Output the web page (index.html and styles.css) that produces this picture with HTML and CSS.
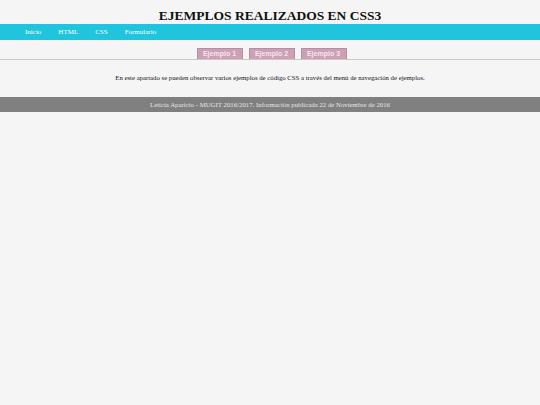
FILE: index.html
```html
<!DOCTYPE html>
<html lang="es">
<head>
<meta charset="utf-8">
<title>Ejemplos CSS3</title>
<link rel="stylesheet" href="styles.css">
</head>
<body>
<header class="header">
  <h1 class="title">EJEMPLOS REALIZADOS EN CSS3</h1>
  <nav class="nav">
    <a class="nav-link" href="#">Inicio</a>
    <a class="nav-link" href="#">HTML</a>
    <a class="nav-link" href="#">CSS</a>
    <a class="nav-link" href="#">Formulario</a>
  </nav>
</header>
<main class="main">
  <div class="tabs">
    <a class="tab" href="#">Ejemplo 1</a>
    <a class="tab" href="#">Ejemplo 2</a>
    <a class="tab" href="#">Ejemplo 3</a>
  </div>
  <p class="intro">En este apartado se pueden observar varios ejemplos de código CSS a través del menú de navegación de ejemplos.</p>
</main>
<footer class="footer">Leticia Aparicio - MUGIT 2016/2017. Información publicada 22 de Noviembre de 2016</footer>
</body>
</html>
```
FILE: styles.css
```css
html, body {
  margin: 0;
  padding: 0;
  background: #f5f5f5;
  font-family: "Liberation Serif", "Times New Roman", serif;
}
.title {
  margin: 0;
  padding-top: 8px;
  height: 16px;
  line-height: 16px;
  font-size: 13.5px;
  font-weight: bold;
  text-align: center;
  color: #111;
}
.nav {
  display: flex;
  background: #20c4dc;
  height: 16px;
  align-items: center;
  padding-left: 25px;
}
.nav-link {
  color: #fff;
  text-decoration: none;
  font-size: 7px;
  margin-right: 17px;
}
.main {
  padding-top: 8px;
}
.tabs {
  display: flex;
  justify-content: center;
  gap: 6px;
  padding-left: 3px;
  border-bottom: 1px solid #c8c8c8;
}
.tab {
  display: block;
  width: 44px;
  height: 10px;
  line-height: 10px;
  text-align: center;
  background: #cea0b6;
  border: 1px solid #b0919f;
  border-bottom: none;
  color: #f4e6ee;
  font-family: "Liberation Sans", Arial, sans-serif;
  font-weight: bold;
  font-size: 7px;
  text-decoration: none;
}
.intro {
  margin: 0;
  padding: 13px 0 14px;
  font-size: 6.75px;
  line-height: 10px;
  text-align: center;
  color: #111;
}
.footer {
  background: #808080;
  color: #e6e6e6;
  height: 15px;
  line-height: 15px;
  font-size: 6.8px;
  text-align: center;
}
```
